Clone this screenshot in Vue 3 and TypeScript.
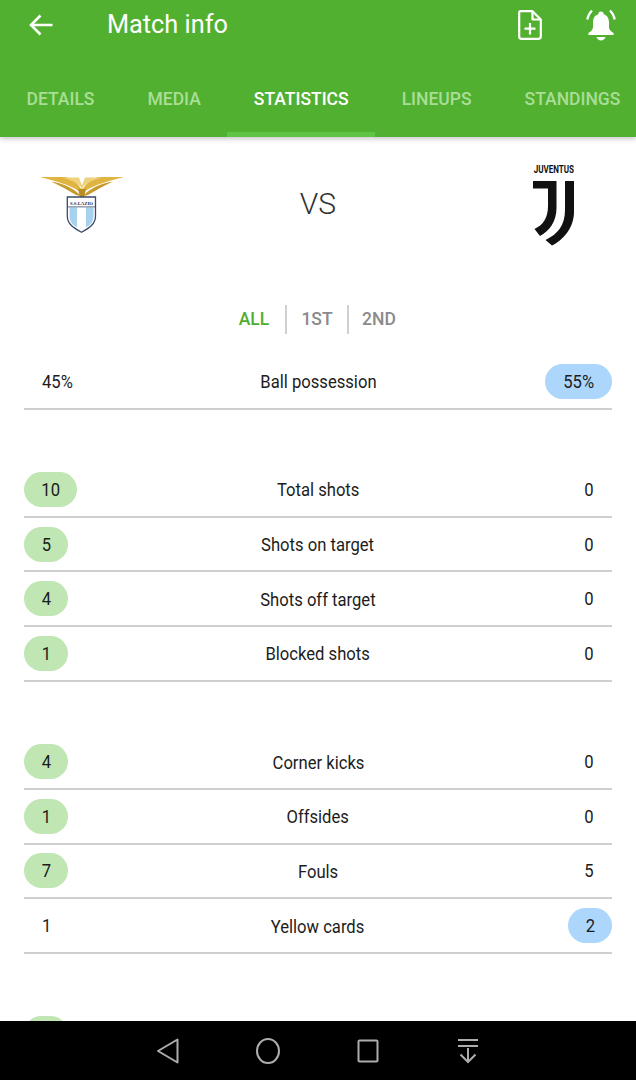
<script setup lang="ts">
interface Stat { label: string; home: string; away: string; win?: 'home' | 'away' }

const tabs = ['DETAILS', 'MEDIA', 'STATISTICS', 'LINEUPS', 'STANDINGS']
const periods = ['ALL', '1ST', '2ND']
const groups: Stat[][] = [
  [{ label: 'Ball possession', home: '45%', away: '55%', win: 'away' }],
  [
    { label: 'Total shots', home: '10', away: '0', win: 'home' },
    { label: 'Shots on target', home: '5', away: '0', win: 'home' },
    { label: 'Shots off target', home: '4', away: '0', win: 'home' },
    { label: 'Blocked shots', home: '1', away: '0', win: 'home' },
  ],
  [
    { label: 'Corner kicks', home: '4', away: '0', win: 'home' },
    { label: 'Offsides', home: '1', away: '0', win: 'home' },
    { label: 'Fouls', home: '7', away: '5', win: 'home' },
    { label: 'Yellow cards', home: '1', away: '2', win: 'away' },
  ],
  [{ label: '', home: '', away: '', win: 'home' }],
]
const wingFeathers = [
  { fill: '#dfb440', d: 'M40 177L65 177C72 178 78 183 83 192L78 190.500C70 185 55 181 40 177Z' },
  { fill: '#eed27c', d: 'M62 177.500L79 177.500L84 191C80 184 72 180 62 177.500Z' },
  { fill: '#c99b2e', d: 'M51 181.500C62 183 72 187 82 196.500L76 195C68 190 60 186 51 181.500Z' },
]
</script>

<template>
  <div class="screen">
    <header class="appbar">
      <div class="toolbar">
        <svg class="back" viewBox="0 0 24 22" width="24" height="22" fill="none" stroke="#fff" stroke-width="2.6">
          <path d="M23.5 11H2.5M11.5 1.5L2 11l9.5 9.5" />
        </svg>
        <h1 class="title">Match info</h1>
        <svg class="doc" viewBox="0 0 24 30" width="24" height="30" fill="none" stroke="#fff" stroke-width="2.2" stroke-linejoin="round">
          <path d="M2.5 1.2H14.5L22.8 9.5V26.6Q22.8 28.8 20.600 28.8H3.400Q1.200 28.8 1.200 26.6V2.500Q1.200 1.200 2.500 1.200Z" />
          <path d="M14.500 1.200V9.500H22.800" />
          <path d="M12 13V24.500M6.500 18.700H17.500" stroke-linejoin="miter" />
        </svg>
        <svg class="bell" viewBox="0 0 30 32" width="30" height="32">
          <path fill="#fff" d="M15 2.500a2.600 2.600 0 0 1 2.600 2.700C21.500 6.300 23 9.600 23 13.500V18c0 2.600 1.600 4.400 4.600 6V26H2.400V24c3-1.600 4.600-3.400 4.600-6v-4.500c0-3.900 1.500-7.200 5.400-8.300A2.600 2.600 0 0 1 15 2.500Z" />
          <path fill="#fff" d="M10.500 28h9c-.6 2.300-2.500 3.500-4.500 3.500S11.100 30.300 10.500 28Z" />
          <path fill="none" stroke="#fff" stroke-width="2.200" d="M6 1.500C3.300 4.200 1.800 7 1.300 10.500M24 1.500c2.700 2.700 4.200 5.500 4.700 9" />
        </svg>
      </div>
      <nav class="tabs">
        <div v-for="(tab, i) in tabs" :key="tab" class="tab" :class="{ active: i === 2 }">{{ tab }}</div>
      </nav>
    </header>

    <main class="content">
      <section class="teams">
        <svg class="crest lazio" viewBox="40 176 84 58" width="84" height="58">
          <path v-for="f in wingFeathers" :key="f.d" :fill="f.fill" :d="f.d" />
          <g transform="matrix(-1 0 0 1 164 0)">
            <path v-for="f in wingFeathers" :key="f.d" :fill="f.fill" :d="f.d" />
          </g>
          <path fill="#b98d24" d="M78 189L86 189L84 197H80Z" />
          <path fill="#fff" stroke="#3b4a68" stroke-width="1.300" d="M67.300 197H95.500V216C95.500 224 89.500 228 81.500 232.300C73.500 228 67.300 224 67.300 216Z" />
          <text x="81.500" y="205" text-anchor="middle" class="lazio-text" textLength="23" lengthAdjust="spacingAndGlyphs">S.S.LAZIO</text>
          <path fill="#a6d2f0" d="M69.500 207.500H77V227.500C72.500 225 69.500 221.500 69.500 216ZM86 207.500H93.500V216C93.500 221.500 90.500 225 86 227.500Z" />
          <path fill="#3b4a68" d="M68 206.500H95V207.300H68Z" />
        </svg>
        <span class="vs">VS</span>
        <div class="juve">
          <span class="juve-name">JUVENTUS</span>
          <svg class="juve-mark" viewBox="530 180 48 66" width="48" height="66">
            <path fill="#111" d="M533 181H556.500V208C556.500 222 549 231 540 236L534.500 229C543 225 548 218 548 206V188.500H533Z" />
            <path fill="#111" d="M565 181H574V212C574 228 563 240 552 245.500L545.500 240C558 234 565 225 565 210Z" />
          </svg>
        </div>
      </section>

      <div class="periods">
        <span v-for="(p, i) in periods" :key="p" class="period" :class="{ current: i === 0 }">{{ p }}</span>
      </div>

      <section v-for="(group, g) in groups" :key="g" class="group">
        <div v-for="(row, r) in group" :key="r" class="row">
          <div class="side home">
            <span class="value" :class="{ 'pill green': row.win === 'home' }"><span class="squeeze">{{ row.home }}</span></span>
          </div>
          <div class="label"><span class="squeeze">{{ row.label }}</span></div>
          <div class="side away">
            <span class="value" :class="{ 'pill blue': row.win === 'away' }"><span class="squeeze">{{ row.away }}</span></span>
          </div>
        </div>
      </section>
    </main>

    <footer class="navbar">
      <div class="nav-item">
        <svg viewBox="0 0 22 26" width="22" height="26" fill="none" stroke="#adadad" stroke-width="2" stroke-linejoin="round">
          <path d="M20.500 1.500V24.500L1 13Z" />
        </svg>
      </div>
      <div class="nav-item">
        <svg viewBox="0 0 26 26" width="26" height="26" fill="none" stroke="#adadad" stroke-width="2">
          <ellipse cx="13" cy="13" rx="11" ry="12" />
        </svg>
      </div>
      <div class="nav-item">
        <svg viewBox="0 0 22 24" width="22" height="24" fill="none" stroke="#adadad" stroke-width="2">
          <rect x="1.500" y="1.500" width="19" height="21" rx="1" />
        </svg>
      </div>
      <div class="nav-item">
        <svg viewBox="0 0 22 26" width="22" height="26" fill="none" stroke="#adadad" stroke-width="2">
          <path d="M1 2H21M1 8H21M11 10V24M3.500 16.500L11 24l7.500-7.500" />
        </svg>
      </div>
    </footer>
  </div>
</template>

<style>
html, body { margin: 0; background: #fff; }
</style>

<style scoped>
.screen {
  width: 636px;
  height: 1080px;
  display: flex;
  flex-direction: column;
  overflow: hidden;
  background: #fff;
  font-family: Roboto, "Liberation Sans", sans-serif;
}
.appbar {
  flex: none;
  height: 137px;
  background: #52b030;
  box-shadow: 0 2px 5px rgba(0, 0, 0, 0.22);
  position: relative;
  z-index: 1;
  display: flex;
  flex-direction: column;
}
.toolbar {
  height: 50px;
  display: flex;
  align-items: center;
  padding: 0 20px 0 29px;
  color: #fff;
}
.title {
  margin: 0 0 2px 54px;
  flex: 1;
  font-size: 25.300px;
  font-weight: 400;
}
.doc { margin-right: 44px; }
.tabs {
  margin-top: auto;
  display: flex;
  height: 87px;
}
.tab {
  flex: none;
  padding: 0 26.500px;
  box-sizing: border-box;
  font-size: 17.500px;
  font-weight: 500;
  line-height: 98px;
  height: 87px;
  color: #a9de97;
  border-bottom: 5px solid transparent;
  white-space: nowrap;
}
.tab.active {
  color: #fff;
  border-bottom-color: #5fc446;
}
.content {
  flex: 1;
  min-height: 0;
  overflow: hidden;
  padding: 0 24px;
}
.teams {
  height: 168px;
  display: grid;
  grid-template-columns: 1fr auto 1fr;
  align-items: start;
}
.lazio { margin: 39px 0 0 16px; }
.juve {
  justify-self: end;
  width: 64px;
  margin: 26px 34px 0 0;
  margin-right: 26px;
  display: flex;
  flex-direction: column;
  align-items: center;
}
.juve-name {
  height: 17px;
  line-height: 13px;
  font-size: 11.500px;
  font-weight: 700;
  color: #111;
  white-space: nowrap;
  transform: scaleX(0.7);
}
.juve-mark { display: block; }
.vs {
  font-size: 30px;
  color: #333;
  margin-top: 49px;
  font-weight: 300;
}
.lazio-text {
  font: 700 5px "Liberation Serif", serif;
  fill: #24324f;
}
.periods {
  display: flex;
  justify-content: center;
  height: 29px;
  align-items: center;
  margin-right: 4px;
}
.period {
  width: 62px;
  box-sizing: border-box;
  height: 29px;
  line-height: 29px;
  text-align: center;
  font-size: 17.500px;
  font-weight: 500;
  color: #8a8a8a;
}
.period + .period { border-left: 2px solid #d0d0d0; }
.period.current { color: #4fae2e; }
.group { margin-bottom: 53.400px; }
.periods + .group { margin-top: 21px; }
.row {
  height: 54.700px;
  box-sizing: border-box;
  border-bottom: 2px solid #cfcfcf;
  display: grid;
  grid-template-columns: 1fr auto 1fr;
  align-items: center;
  font-size: 19px;
  color: #1c1c1c;
}
.label {
  text-align: center;
  padding-top: 1px;
}
.squeeze {
  display: inline-block;
  transform: scaleX(0.875);
}
.side { display: flex; }
.home { justify-content: flex-start; }
.away { justify-content: flex-end; }
.value {
  display: block;
  padding: 0 18px;
  height: 35px;
  line-height: 36px;
}
.home .value .squeeze { transform-origin: left center; }
.away .value .squeeze { transform-origin: right center; }
.value.pill {
  box-sizing: border-box;
  min-width: 44px;
  padding: 0 16px;
  text-align: center;
  border-radius: 18px;
}
.value.pill .squeeze { transform-origin: center; }
.pill.green { background: #bfe6b3; }
.pill.blue { background: #acd6fb; }
.navbar {
  flex: none;
  height: 59px;
  background: #000;
  position: relative;
  z-index: 2;
  display: flex;
  justify-content: center;
  align-items: center;
}
.nav-item {
  width: 100px;
  display: flex;
  justify-content: center;
}
</style>
